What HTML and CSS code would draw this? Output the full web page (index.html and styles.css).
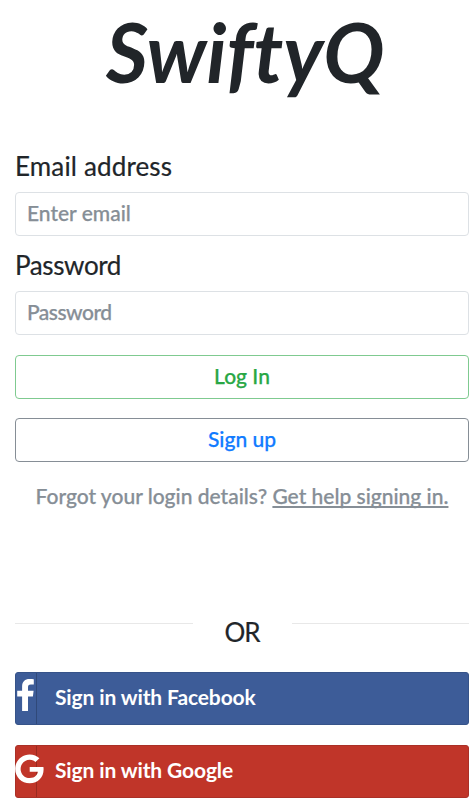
FILE: index.html
```html
<!DOCTYPE html>
<html lang="en">
<head>
<meta charset="utf-8">
<meta name="viewport" content="width=device-width, initial-scale=1">
<title>SwiftyQ</title>
<link rel="stylesheet" href="styles.css">
</head>
<body>
<main class="login">
  <h1 class="brand"><span class="brand-name">SwiftyQ</span></h1>
  <form class="form">
    <label class="label email-label" for="email">Email address</label>
    <input class="field email" id="email" type="email" placeholder="Enter email">
    <label class="label password-label" for="password">Password</label>
    <input class="field password" id="password" type="password" placeholder="Password">
    <button class="button login-button" type="button">Log In</button>
    <button class="button signup-button" type="button">Sign up</button>
  </form>
  <p class="help">Forgot your login details? <a class="help-link" href="#">Get help signing in.</a></p>
  <div class="divider"><span class="line"></span><span class="or">OR</span><span class="line"></span></div>
  <div class="social-list">
    <button class="social facebook" type="button">
      <span class="social-icon"><svg width="18" height="32" viewBox="0 0 18 32"><path fill="#fff" d="M16.8.2v5.2h-3c-2.3 0-2.8 1.1-2.8 2.8v3.5h5.6L15.9 17.4H11V32H5.1V17.4H.2v-5.7h4.9V7.4C5.1 2.6 8 0 12.4 0c2.1 0 3.8.1 4.4.2z"/></svg></span>
      <span class="social-text">Sign in with Facebook</span>
    </button>
    <button class="social google" type="button">
      <span class="social-icon"><svg width="29" height="30" viewBox="0 0 29 30"><path fill="#fff" d="M14.7 12.9h13.7c.1.8.2 1.4.2 2.4 0 8.2-5.5 14-13.9 14C6.6 29.3.2 22.9.2 14.9S6.6.4 14.7.4c3.9 0 7.2 1.4 9.7 3.8l-3.9 3.7c-1.1-1-2.9-2.2-5.8-2.2-5 0-9.1 4.1-9.1 9.2s4.1 9.2 9.1 9.2c5.7 0 7.9-4.1 8.2-6.3h-8.2z"/></svg></span>
      <span class="social-text">Sign in with Google</span>
    </button>
  </div>
</main>
</body>
</html>
```
FILE: styles.css
```css
* { box-sizing: border-box; }
body {
  margin: 0;
  background: #fff;
  color: #212529;
  font-family: Lato, "Noto Sans", sans-serif;
  font-size: 21px;
}
.login { padding: 0 7px 0 15px; }
.brand {
  margin: 0;
  height: 148px;
  padding-left: 91px;
  font-size: 83px;
  line-height: 102px;
  font-weight: 700;
  font-style: italic;
  white-space: nowrap;
  font-variant-ligatures: none;
}
.brand-name { display: inline-block; transform: scaleX(.98); transform-origin: left; }
.form { display: flex; flex-direction: column; }
.label { height: 44px; font-size: 26px; line-height: 36px; -webkit-text-stroke: .2px; }
.email-label { letter-spacing: .15px; }
.password-label { height: 43px; margin-top: 12px; line-height: 34px; letter-spacing: -.4px; }
.field, .button {
  width: 100%;
  height: 44px;
  border: 1px solid #dde1e5;
  border-radius: 4px;
  background: #fff;
  font: 500 21px/30px Lato, "Noto Sans", sans-serif;
  -webkit-text-stroke: .25px;
}
.field { padding: 0 11px 3px 11px; color: #495057; }
.field::placeholder { color: #868e96; opacity: 1; }
.password { letter-spacing: -.5px; }
.button { margin-top: 20px; padding: 0 0 3px; }
.login-button { color: #28a745; border-color: #7fca90; }
.signup-button { margin-top: 19px; color: #117bff; border-color: #868e96; }
.help {
  margin: 19px 0 0;
  height: 30px;
  line-height: 30px;
  text-align: center;
  font-weight: 500;
  color: #868e96;
  white-space: nowrap;
  -webkit-text-stroke: .25px;
}
.help-link { color: inherit; text-decoration-thickness: 2px; text-underline-offset: 2px; text-decoration-skip-ink: none; }
.divider { display: flex; height: 40px; margin-top: 103px; }
.line { flex: 1; height: 1px; margin-top: 9px; background: #e8e8e8; }
.or { width: 99px; text-align: center; font-size: 26px; line-height: 36px; letter-spacing: -1px; -webkit-text-stroke: .2px; }
.social-list { display: flex; flex-direction: column; gap: 20px; margin-top: 18px; }
.social {
  display: flex;
  align-items: center;
  width: 100%;
  height: 53px;
  padding: 0;
  border: 1px solid #365389;
  border-radius: 3px;
  background: #3d5c98;
  color: #fff;
  font: 700 21px/30px Lato, "Noto Sans", sans-serif;
  letter-spacing: -.12px;
}
.google { background: #c03529; border-color: #aa3027; }
.social-icon { display: flex; width: 21px; height: 51px; padding-top: 6px; border-right: 1px solid rgba(0,0,0,.2); }
.social-icon svg { flex: none; margin-left: 1px; }
.google .social-icon { padding-top: 8px; }
.google .social-icon svg { margin-left: -1px; }
.social-text { padding: 0 0 3px 18px; }
```
